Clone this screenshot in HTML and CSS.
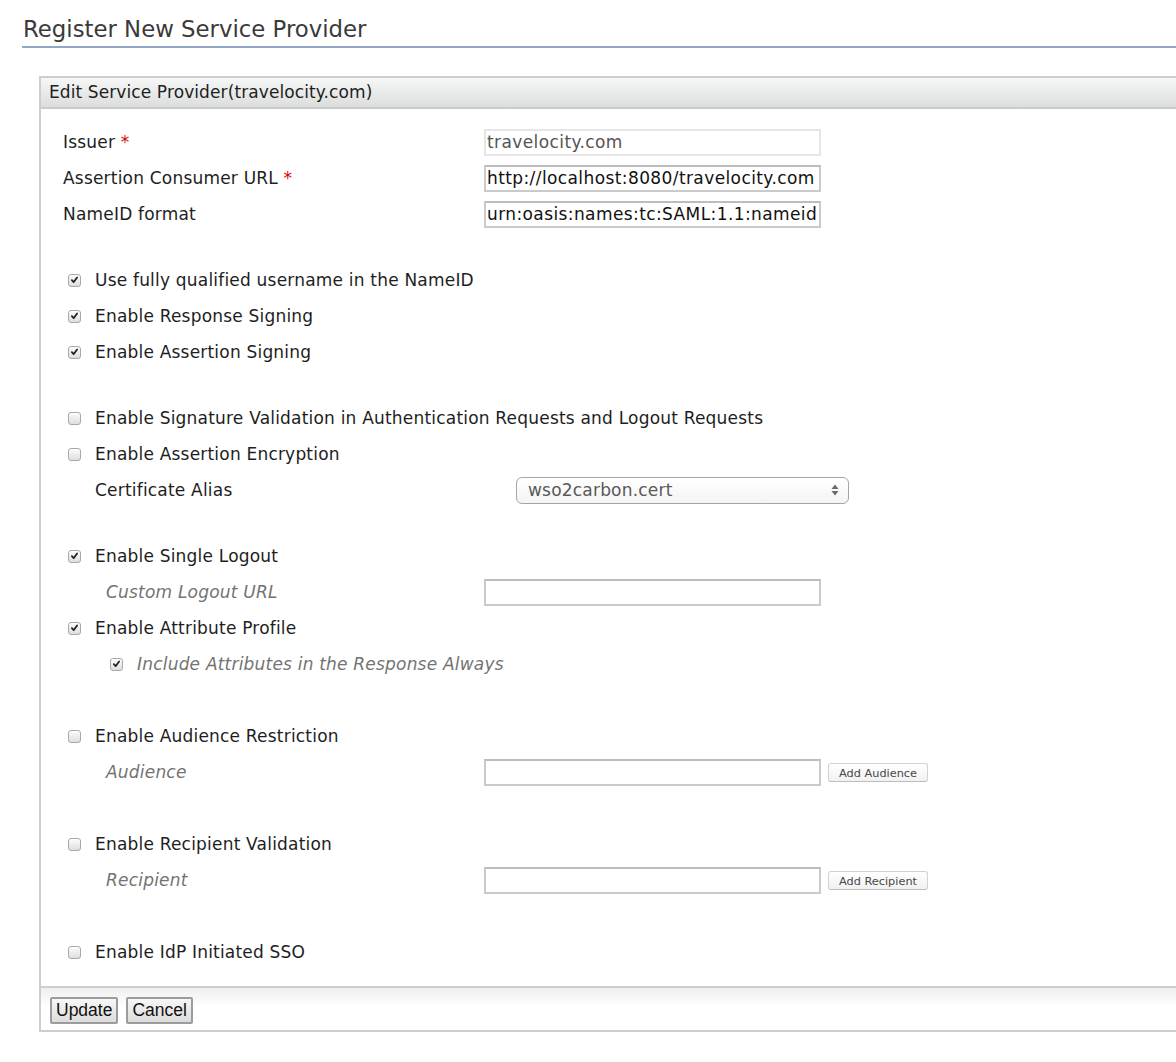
FILE: index.html
```html
<!DOCTYPE html>
<html>
<head>
<meta charset="utf-8">
<link rel="stylesheet" href="styles.css">
</head>
<body>
<div class="page">
  <h2 class="title">Register New Service Provider</h2>
  <div class="panel">
    <div class="panel-head">Edit Service Provider(travelocity.com)</div>
    <div class="panel-body">
      <div class="row">
        <div class="lbl">Issuer <span class="req">*</span></div>
        <input class="txt ro" type="text" value="travelocity.com" readonly>
      </div>
      <div class="row">
        <div class="lbl">Assertion Consumer URL <span class="req">*</span></div>
        <input class="txt" type="text" value="http://localhost:8080/travelocity.com">
      </div>
      <div class="row">
        <div class="lbl">NameID format</div>
        <input class="txt" type="text" value="urn:oasis:names:tc:SAML:1.1:nameid-format:emailAddress">
      </div>

      <div class="row sep">
        <span class="cb"><svg viewBox="0 0 13 13"><path d="M3.4 6.6 L5.5 9 L9.6 3.6"/></svg></span>
        <span>Use fully qualified username in the NameID</span>
      </div>
      <div class="row">
        <span class="cb"><svg viewBox="0 0 13 13"><path d="M3.4 6.6 L5.5 9 L9.6 3.6"/></svg></span>
        <span>Enable Response Signing</span>
      </div>
      <div class="row">
        <span class="cb"><svg viewBox="0 0 13 13"><path d="M3.4 6.6 L5.5 9 L9.6 3.6"/></svg></span>
        <span>Enable Assertion Signing</span>
      </div>

      <div class="row sep">
        <span class="cb"></span>
        <span>Enable Signature Validation in Authentication Requests and Logout Requests</span>
      </div>
      <div class="row">
        <span class="cb"></span>
        <span>Enable Assertion Encryption</span>
      </div>
      <div class="row">
        <div class="lbl sub">Certificate Alias</div>
        <div class="select">
          <span>wso2carbon.cert</span>
          <svg class="arrows" viewBox="0 0 8 12"><path d="M4 0.5 L7.5 5 L0.5 5 Z M0.5 7 L7.5 7 L4 11.5 Z"/></svg>
        </div>
      </div>

      <div class="row sep">
        <span class="cb"><svg viewBox="0 0 13 13"><path d="M3.4 6.6 L5.5 9 L9.6 3.6"/></svg></span>
        <span>Enable Single Logout</span>
      </div>
      <div class="row">
        <div class="lbl ital">Custom Logout URL</div>
        <input class="txt" type="text" value="">
      </div>
      <div class="row">
        <span class="cb"><svg viewBox="0 0 13 13"><path d="M3.4 6.6 L5.5 9 L9.6 3.6"/></svg></span>
        <span>Enable Attribute Profile</span>
      </div>
      <div class="row">
        <span class="cb nested"><svg viewBox="0 0 13 13"><path d="M3.4 6.6 L5.5 9 L9.6 3.6"/></svg></span>
        <span class="it-text">Include Attributes in the Response Always</span>
      </div>

      <div class="row sep2">
        <span class="cb"></span>
        <span>Enable Audience Restriction</span>
      </div>
      <div class="row">
        <div class="lbl ital">Audience</div>
        <input class="txt" type="text" value="">
        <button class="small-btn">Add Audience</button>
      </div>

      <div class="row sep2">
        <span class="cb"></span>
        <span>Enable Recipient Validation</span>
      </div>
      <div class="row">
        <div class="lbl ital">Recipient</div>
        <input class="txt" type="text" value="">
        <button class="small-btn">Add Recipient</button>
      </div>

      <div class="row sep2">
        <span class="cb"></span>
        <span>Enable IdP Initiated SSO</span>
      </div>
    </div>
    <div class="panel-foot">
      <button class="btn">Update</button>
      <button class="btn">Cancel</button>
    </div>
  </div>
</div>
</body>
</html>
```
FILE: styles.css
```css
html {
  overflow: hidden;
}
body {
  margin: 0;
  background: #fff;
  font-family: "DejaVu Sans", sans-serif;
  color: #1e1e1e;
}
.page {
  padding-top: 15px;
}
.title {
  margin: 0 0 0 22px;
  font-weight: normal;
  font-size: 22.8px;
  color: #3a3a3a;
  line-height: 28px;
  padding-left: 1px;
  padding-bottom: 3px;
  border-bottom: 2px solid #94a6c6;
}
.panel {
  margin: 28px -30px 0 39px;
  border: 2px solid #cdcdcd;
}
.panel-head {
  height: 29px;
  line-height: 29px;
  padding-left: 8px;
  font-size: 17px;
  letter-spacing: 0.1px;
  color: #1e1e1e;
  background: linear-gradient(#f6f7f7, #dcdddd);
  border-bottom: 2px solid #cbcbcb;
}
.panel-body {
  padding: 15px 0 16px 22px;
  font-size: 17px;
  letter-spacing: 0.2px;
}
.row {
  height: 36px;
  display: flex;
  align-items: center;
  white-space: nowrap;
}
.row.sep {
  margin-top: 30px;
}
.row.sep2 {
  margin-top: 36px;
}
.lbl {
  box-sizing: border-box;
  width: 421px;
  flex: none;
}
.lbl.sub {
  padding-left: 32px;
  width: 453px;
}
.lbl.ital {
  padding-left: 43px;
  font-style: italic;
  color: #737373;
}
.req {
  color: #e00000;
}
.txt {
  box-sizing: border-box;
  width: 337px;
  height: 27px;
  margin: 0;
  padding: 0 1px;
  border: 2px solid #cacaca;
  border-top-color: #bdbdbd;
  font-family: "DejaVu Sans", sans-serif;
  font-size: 17px;
  letter-spacing: 0.4px;
  color: #111;
  background: #fff;
  outline: none;
}
.txt.ro {
  border-color: #e6e6e6;
  color: #545454;
}
.cb {
  flex: none;
  box-sizing: border-box;
  width: 13px;
  height: 13px;
  margin: 0 14px 0 5px;
  border: 1px solid #a8a8a8;
  border-radius: 3px;
  background: linear-gradient(#fcfcfc, #dedede);
  box-shadow: inset 0 1px 0 #fff;
  display: flex;
  align-items: center;
  justify-content: center;
}
.cb svg {
  width: 12px;
  height: 12px;
  fill: none;
  stroke: #262626;
  stroke-width: 2.1;
  stroke-linecap: round;
  stroke-linejoin: round;
}
.cb.nested {
  margin-left: 47px;
  margin-right: 14px;
}
.it-text {
  font-style: italic;
  color: #737373;
}
.select {
  box-sizing: border-box;
  width: 333px;
  height: 27px;
  border: 1.5px solid #a5a5a5;
  border-radius: 6px;
  background: linear-gradient(#ffffff, #f4f4f4);
  display: flex;
  align-items: center;
  justify-content: space-between;
  padding: 0 9px 0 11px;
  color: #585858;
}
.select .arrows {
  width: 8px;
  height: 12px;
  fill: #6a6a6a;
}
.small-btn {
  margin-left: 7px;
  box-sizing: border-box;
  width: 100px;
  height: 19px;
  padding: 2px 0 0;
  border: 1px solid #d2d2d2;
  border-bottom-color: #bdbdbd;
  border-radius: 3px;
  background: linear-gradient(#ffffff, #f1f1f1);
  font-family: "DejaVu Sans", sans-serif;
  font-size: 11.3px;
  letter-spacing: 0;
  color: #474747;
  line-height: 15px;
}
.panel-foot {
  border-top: 2px solid #cdcdcd;
  height: 44px;
  padding: 9px 0 0 9px;
  box-sizing: border-box;
  display: flex;
  align-items: flex-start;
  gap: 8px;
  background: linear-gradient(#efefef, #ffffff 45%);
}
.btn {
  height: 27px;
  margin: 0;
  padding: 0 4px;
  border: 2px solid #9c9c9c;
  border-radius: 2px;
  background: linear-gradient(#f7f7f7, #dcdcdc);
  font-family: "Liberation Sans", Arial, sans-serif;
  font-size: 17.5px;
  color: #111;
  line-height: 21px;
}
```
